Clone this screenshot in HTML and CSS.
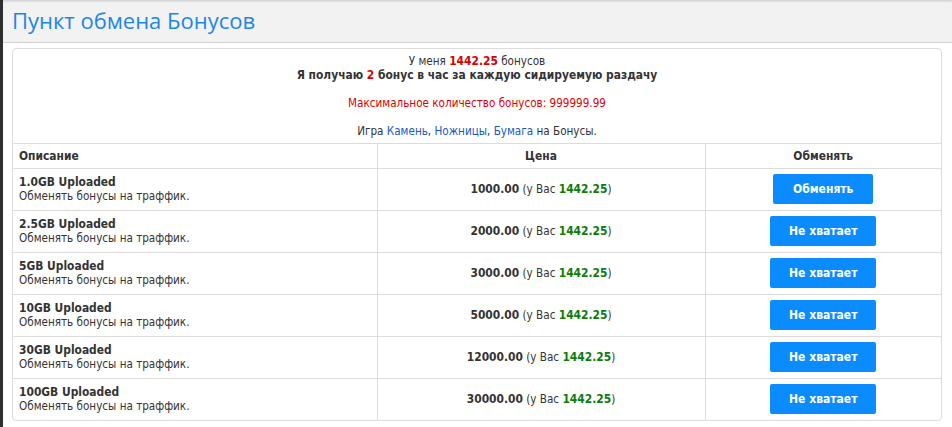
FILE: index.html
```html
<!DOCTYPE html>
<html lang="ru">
  <head>
    <meta charset="UTF-8" />
    <meta name="viewport" content="width=device-width, initial-scale=1.0" />
    <title>Пункт обмена Бонусов</title>
    <link rel="stylesheet" href="styles.css">
  </head>
  <body>
    <div class="page">
      <div class="page-head">
        <h1 class="title">Пункт обмена Бонусов</h1>
      </div>
      <div class="box">
        <table class="bonus-table">
          <colgroup>
            <col class="col-desc">
            <col class="col-price">
            <col class="col-action">
          </colgroup>
          <tr>
            <td class="info" colspan="3">
              У меня <b class="red">1442.25</b> бонусов<br>
              <b>Я получаю <span class="red">2</span> бонус в час за каждую сидируемую раздачу</b><br>
              <br>
              <span class="red-text">Максимальное количество бонусов: 999999.99</span><br>
              <br>
              Игра <a href="#">Камень</a>, <a href="#">Ножницы</a>, <a href="#">Бумага</a> на Бонусы.
            </td>
          </tr>
          <tr class="head-row">
            <th class="left">Описание</th>
            <th>Цена</th>
            <th>Обменять</th>
          </tr>
          <tr>
            <td><b>1.0GB Uploaded</b><br>Обменять бонусы на траффик.</td>
            <td class="center"><b>1000.00</b> (у Вас <b class="green">1442.25</b>)</td>
            <td class="center btn-cell"><button class="btn">Обменять</button></td>
          </tr>
          <tr>
            <td><b>2.5GB Uploaded</b><br>Обменять бонусы на траффик.</td>
            <td class="center"><b>2000.00</b> (у Вас <b class="green">1442.25</b>)</td>
            <td class="center btn-cell"><button class="btn wide">Не хватает</button></td>
          </tr>
          <tr>
            <td><b>5GB Uploaded</b><br>Обменять бонусы на траффик.</td>
            <td class="center"><b>3000.00</b> (у Вас <b class="green">1442.25</b>)</td>
            <td class="center btn-cell"><button class="btn wide">Не хватает</button></td>
          </tr>
          <tr>
            <td><b>10GB Uploaded</b><br>Обменять бонусы на траффик.</td>
            <td class="center"><b>5000.00</b> (у Вас <b class="green">1442.25</b>)</td>
            <td class="center btn-cell"><button class="btn wide">Не хватает</button></td>
          </tr>
          <tr>
            <td><b>30GB Uploaded</b><br>Обменять бонусы на траффик.</td>
            <td class="center"><b>12000.00</b> (у Вас <b class="green">1442.25</b>)</td>
            <td class="center btn-cell"><button class="btn wide">Не хватает</button></td>
          </tr>
          <tr>
            <td><b>100GB Uploaded</b><br>Обменять бонусы на траффик.</td>
            <td class="center"><b>30000.00</b> (у Вас <b class="green">1442.25</b>)</td>
            <td class="center btn-cell"><button class="btn wide">Не хватает</button></td>
          </tr>
        </table>
      </div>
    </div>
  </body>
</html>
```

FILE: styles.css
```css
body {
  margin: 0;
  background: #fff;
  font-family: "DejaVu Sans Condensed", "DejaVu Sans", sans-serif;
  font-size: 11.6px;
  color: #333;
}
.page {
  border-left: 3px solid #2e2e2e;
  min-height: 427px;
  box-sizing: border-box;
}
.page-head {
  height: 42px;
  background: #f2f2f2;
  border-bottom: 1px solid #cfcfcf;
  box-shadow: inset 0 3px 3px -2px rgba(0, 0, 0, 0.18);
  padding-left: 9px;
  display: flex;
  align-items: center;
}
.title {
  margin: 0 0 2px;
  font-family: "Open Sans", sans-serif;
  font-weight: normal;
  font-size: 22px;
  color: #1e87e4;
}
.box {
  margin: 5px 10px 0 9px;
  border: 1px solid #dcdcdc;
  border-radius: 4px;
  overflow: hidden;
}
.bonus-table {
  width: 100%;
  border-collapse: collapse;
  table-layout: fixed;
  line-height: 14px;
}
.bonus-table b,
.bonus-table th {
  font-size: 11.9px;
}
.col-desc {
  width: 364px;
}
.col-price {
  width: 328px;
}
.bonus-table td,
.bonus-table th {
  border: 1px solid #dcdcdc;
  padding: 6px 6px 7px;
  vertical-align: middle;
}
.bonus-table tr:first-child td {
  border-top: none;
}
.bonus-table tr td:first-child,
.bonus-table tr th:first-child {
  border-left: none;
}
.bonus-table tr td:last-child,
.bonus-table tr th:last-child {
  border-right: none;
}
.bonus-table tr:last-child td {
  border-bottom: none;
}
.bonus-table td.info {
  text-align: center;
  padding: 5px 6px;
}
.head-row th {
  padding: 5px 6px;
  font-weight: bold;
  text-align: center;
  color: #333;
}
.head-row th.left {
  text-align: left;
}
.center {
  text-align: center;
}
.bonus-table td.btn-cell {
  padding: 5px 6px 6px;
}
.red {
  color: #d90000;
}
.red-text {
  color: #dd0000;
}
.green {
  color: #0b7d0b;
}
a {
  color: #1b58bf;
  text-decoration: none;
}
.btn {
  width: 100px;
  height: 30px;
  border: none;
  border-radius: 2px;
  background: #0a8cff;
  color: #fff;
  font-family: "DejaVu Sans Condensed", "DejaVu Sans", sans-serif;
  font-weight: bold;
  font-size: 12px;
  cursor: pointer;
}
.btn.wide {
  width: 106px;
}
```
